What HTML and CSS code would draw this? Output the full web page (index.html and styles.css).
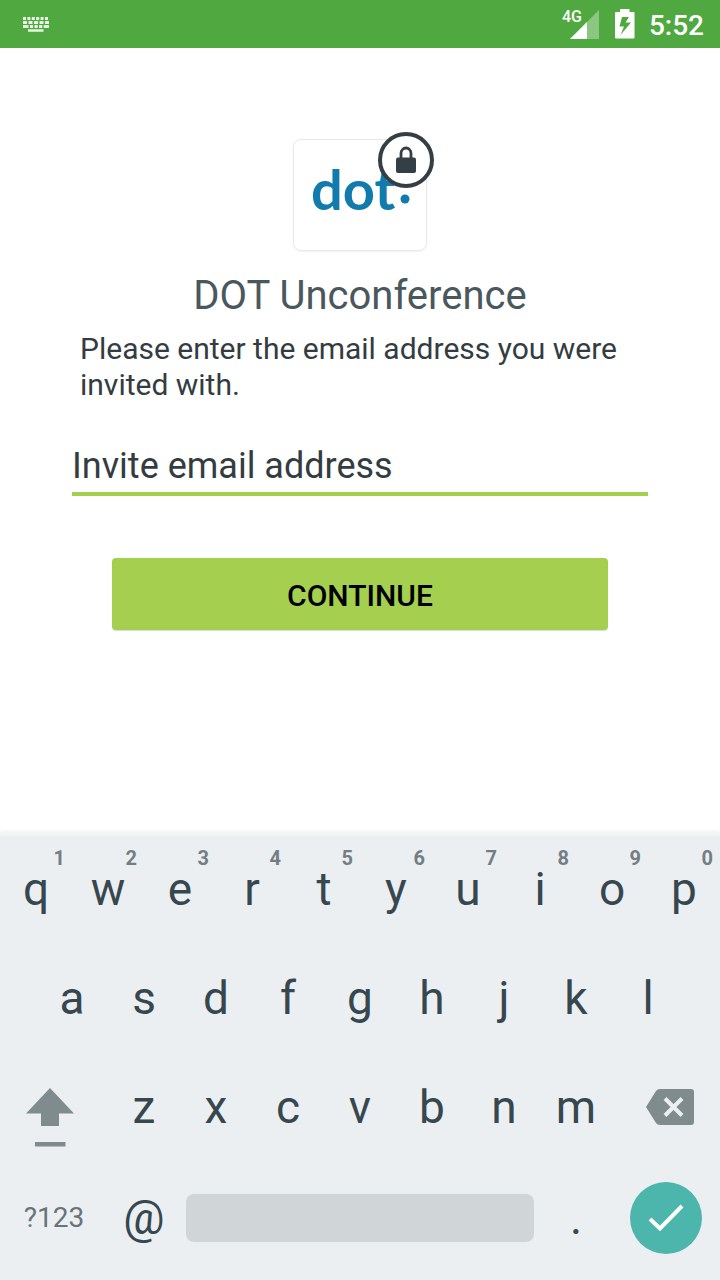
FILE: index.html
```html
<!DOCTYPE html>
<html lang="en">
<head>
<meta charset="utf-8">
<meta name="viewport" content="width=device-width, initial-scale=1">
<title>DOT Unconference</title>
<link rel="stylesheet" href="styles.css">
</head>
<body>
<header class="status">
  <svg class="status-keyboard" width="28" height="16" viewBox="0 0 28 16" role="img" aria-label="Keyboard active">
    <g fill="none" stroke="#e9f6e5" stroke-width="3">
      <path d="M1 2.500H27" stroke-dasharray="3 1.400"/>
      <path d="M1 6.500H27" stroke-dasharray="4 1.500"/>
      <path d="M1 10.500H27" stroke-dasharray="5.500 1.400 3.200 1.400 3.200 1.400 3.200 1.400 5.500"/>
      <path d="M6 14.500H21.500" stroke-width="2.500"/>
    </g>
  </svg>
  <div class="status-right">
    <div class="signal">
      <svg width="29" height="29" viewBox="0 0 29 29" role="img" aria-label="Signal strength">
        <path d="M29 0V29H0Z" fill="#fff" fill-opacity=".35"/>
        <path d="M17 12V29H0Z" fill="#fff"/>
      </svg>
      <span class="network">4G</span>
    </div>
    <svg class="battery" width="20" height="30" viewBox="0 0 20 30" role="img" aria-label="Battery charging">
      <path fill="#fff" fill-rule="evenodd" d="M5 0H14.500V3H18.500Q19.500 3 19.500 4V28.500Q19.500 29.500 18.500 29.500H1Q0 29.500 0 28.500V4Q0 3 1 3H5ZM7 8L4.500 17.500H9L5.500 26L16 13.500H10.500L14 8Z"/>
    </svg>
    <time class="clock">5:52</time>
  </div>
</header>

<main class="content">
  <div class="brand">
    <svg class="logo" width="104" height="60" viewBox="0 0 104 60" role="img" aria-label="dot.">
      <text class="wordmark" x="-1" y="48">dot</text>
      <circle cx="93" cy="37" r="4.500" fill="#127bae"/>
    </svg>
    <svg class="lock" width="58" height="58" viewBox="0 0 58 58" role="img" aria-label="Private">
      <circle cx="29" cy="29" r="26" fill="#fff" stroke="#343f45" stroke-width="4"/>
      <rect x="19" y="26.500" width="20" height="15.500" rx="2" fill="#343f45"/>
      <path d="M24 27V22.500a5 5.500 0 0 1 10 0V27" fill="none" stroke="#343f45" stroke-width="2.800"/>
    </svg>
  </div>
  <h1 class="title">DOT Unconference</h1>
  <form class="form">
    <label class="prompt" for="email">Please enter the email address you were invited with.</label>
    <input class="email" id="email" type="email" placeholder="Invite email address">
    <button class="continue" type="button">CONTINUE</button>
  </form>
</main>

<section class="keyboard" aria-label="Keyboard">
  <div class="row">
    <button class="key">q<span class="hint">1</span></button>
    <button class="key">w<span class="hint">2</span></button>
    <button class="key">e<span class="hint">3</span></button>
    <button class="key">r<span class="hint">4</span></button>
    <button class="key">t<span class="hint">5</span></button>
    <button class="key">y<span class="hint">6</span></button>
    <button class="key">u<span class="hint">7</span></button>
    <button class="key">i<span class="hint">8</span></button>
    <button class="key">o<span class="hint">9</span></button>
    <button class="key">p<span class="hint">0</span></button>
  </div>
  <div class="row row-home">
    <button class="key">a</button>
    <button class="key">s</button>
    <button class="key">d</button>
    <button class="key">f</button>
    <button class="key">g</button>
    <button class="key">h</button>
    <button class="key">j</button>
    <button class="key">k</button>
    <button class="key">l</button>
  </div>
  <div class="row row-lower">
    <button class="key shift" aria-label="Shift">
      <svg width="48" height="60" viewBox="0 0 48 60"><path d="M24 0L48 25.500H33V38H15V25.500H0ZM9 54H39.500V58.500H9Z" fill="#7f8b8d"/></svg>
    </button>
    <button class="key">z</button>
    <button class="key">x</button>
    <button class="key">c</button>
    <button class="key">v</button>
    <button class="key">b</button>
    <button class="key">n</button>
    <button class="key">m</button>
    <button class="key delete" aria-label="Delete">
      <svg width="48" height="36" viewBox="0 0 48 36"><path d="M14 0H45Q48 0 48 3V33Q48 36 45 36H14Q11.500 36 10 34L0 18L10 2Q11.500 0 14 0Z" fill="#7f8b8d"/><path d="M19 9.500L36 26.500M36 9.500L19 26.500" stroke="#ebeff1" stroke-width="4"/></svg>
    </button>
  </div>
  <div class="row row-bottom">
    <button class="key symbols">?123</button>
    <button class="key">@</button>
    <button class="space" aria-label="Space"></button>
    <button class="key period">.</button>
    <button class="done" aria-label="Done">
      <svg width="36" height="28" viewBox="0 0 36 28"><path d="M2 15L12 24.500L34 2" fill="none" stroke="#fff" stroke-width="4"/></svg>
    </button>
  </div>
</section>
</body>
</html>
```

FILE: styles.css
```css
* {
  box-sizing: border-box;
}

body {
  margin: 0;
  min-height: 100vh;
  display: flex;
  flex-direction: column;
  background: #fff;
  color: #343c42;
  font-family: Roboto, "Liberation Sans", sans-serif;
}

button {
  border: 0;
  padding: 0;
  background: none;
  color: inherit;
  font: inherit;
}

svg {
  display: block;
}

.status {
  height: 48px;
  padding: 0 16px 0 22px;
  display: flex;
  align-items: center;
  justify-content: space-between;
  background: #4fa940;
  color: #fff;
}

.status-right {
  display: flex;
  align-items: center;
  gap: 16px;
}

.battery {
  margin-right: -2px;
}

.signal {
  position: relative;
}

.network {
  position: absolute;
  left: -8px;
  top: -1px;
  font-size: 16px;
  line-height: 16px;
  font-weight: 500;
}

.clock {
  padding-top: 4px;
  font-size: 28px;
  line-height: 44px;
  font-weight: 500;
}

.content {
  flex: 1;
  padding: 91px 72px 32px;
  display: flex;
  flex-direction: column;
  align-items: center;
}

.brand {
  position: relative;
  width: 134px;
  height: 112px;
  padding: 22px 0 0 18px;
  border: 1px solid #e8e8e8;
  border-radius: 8px;
  box-shadow: 0 1px 2px rgba(0, 0, 0, 0.06);
}

.wordmark {
  fill: #127bae;
  font-family: Lato, sans-serif;
  font-size: 56px;
  font-weight: 700;
}

.lock {
  position: absolute;
  top: -9px;
  right: -9px;
}

.title {
  margin: 21px 0 11px;
  font-size: 40px;
  line-height: 48px;
  font-weight: 400;
  color: #4a585e;
}

.form {
  align-self: stretch;
  display: flex;
  flex-direction: column;
}

.prompt {
  padding: 0 8px;
  font-size: 30px;
  line-height: 36px;
}

.email {
  width: 100%;
  height: 56px;
  margin-top: 37px;
  padding: 0;
  border: 0;
  border-bottom: 4px solid #a4cf4f;
  outline: 0;
  background: none;
  color: inherit;
  font: inherit;
  font-size: 36px;
}

.email::placeholder {
  color: #343c42;
  opacity: 1;
}

.continue {
  height: 72px;
  margin: 62px 40px 0;
  padding-top: 2px;
  border-radius: 4px;
  background: #a4cf4f;
  box-shadow: 0 1px 1px rgba(0, 0, 0, 0.15);
  color: #000;
  font-size: 30px;
  font-weight: 500;
}

.keyboard {
  padding-bottom: 8px;
  border-top: 4px solid #f2f5f6;
  background: #ebeff1;
  box-shadow: 0 -1px 3px rgba(0, 0, 0, 0.06);
  color: #37474f;
}

.row {
  height: 109px;
  display: grid;
  grid-template-columns: repeat(10, 1fr);
  align-items: center;
}

.row-home {
  grid-template-columns: repeat(9, 1fr);
  padding: 0 5%;
}

.row-lower {
  grid-template-columns: 15fr repeat(7, 10fr) 15fr;
}

.row-bottom {
  grid-template-columns: 15fr 10fr 50fr 10fr 15fr;
}

.key {
  position: relative;
  height: 100%;
  padding-bottom: 4px;
  display: flex;
  align-items: center;
  justify-content: center;
  font-size: 46px;
}

.row-bottom .key {
  padding-bottom: 0;
}

.hint {
  position: absolute;
  top: 10px;
  right: 7px;
  font-size: 20px;
  line-height: 24px;
  font-weight: 700;
  color: #737e83;
}

.key.shift {
  justify-content: flex-start;
  padding: 18px 0 0 26px;
}

.key.delete {
  justify-content: flex-end;
  padding-right: 26px;
}

.key.symbols {
  font-size: 28px;
  color: #697478;
}

.space {
  height: 48px;
  margin: 0 6px;
  border-radius: 8px;
  background: #d0d5d8;
}

.done {
  width: 72px;
  height: 72px;
  margin-left: 18px;
  display: flex;
  align-items: center;
  justify-content: center;
  border-radius: 50%;
  background: #4db6ac;
}
```
